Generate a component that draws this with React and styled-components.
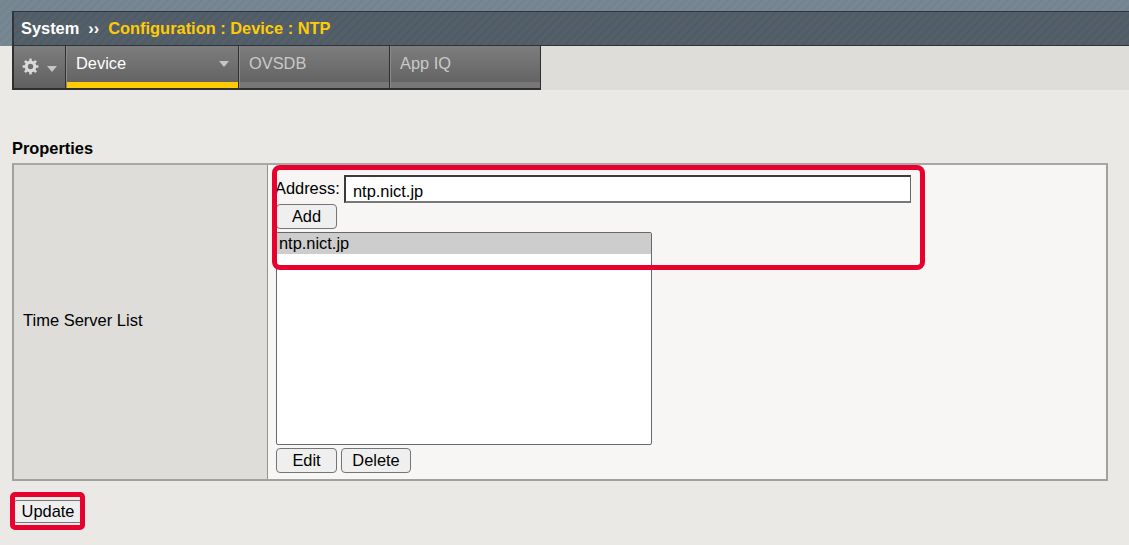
import React from "react";
import styled, { createGlobalStyle } from "styled-components";

const GlobalStyle = createGlobalStyle`
  * { box-sizing: border-box; }
  body {
    margin: 0;
    background: #eae9e5;
    font-family: "Liberation Sans", Arial, sans-serif;
    font-size: 16.4px;
    line-height: 20px;
    color: #000;
  }
`;

const Page = styled.div`
  height: 545px;
  overflow: hidden;
`;

const Banner = styled.header`
  height: 46px;
  padding: 11px 0 0 12px;
  background: repeating-linear-gradient(135deg, #778794 0 3px, #73848f 4px 6px);
`;

const Breadcrumb = styled.div`
  height: 35px;
  display: flex;
  align-items: center;
  padding: 0 0 2px 7px;
  border: solid #30353a;
  border-width: 1px 0 1px 2px;
  background: repeating-linear-gradient(135deg, #535f69 0 3px, #505b65 4px 6px);
  font-weight: bold;
  color: #fff;
  white-space: pre;
`;

const Chevrons = styled.span`
  margin: 0 9px 0 9px;
`;

const Current = styled.span`
  color: #ffcb05;
`;

const MenuRow = styled.div`
  display: flex;
  height: 44px;
  padding-left: 12px;
`;

const MenuFill = styled.div`
  flex: 1;
  background: #deddd9;
`;

const Tab = styled.div`
  position: relative;
  width: ${(p) => p.$width}px;
  height: 44px;
  display: flex;
  justify-content: space-between;
  padding: 7px 9px 0 10px;
  border: solid #302f30;
  border-width: 0 1px 2px 0;
  box-shadow: inset 1px 0 #8b8b8b;
  background: linear-gradient(#7d7d7d, #646464 36px);
  color: ${(p) => (p.$active ? "#fff" : "#c9c9c9")};

  &::after {
    content: "";
    position: absolute;
    left: 1px;
    right: 0;
    bottom: 0;
    height: 6px;
    background: ${(p) => (p.$active ? "#ffcb05" : "#777")};
  }
`;

const SettingsTab = styled.div`
  width: 54px;
  height: 44px;
  display: flex;
  gap: 8px;
  padding: 12px 0 0 8px;
  border: solid #302f30;
  border-width: 0 1px 2px 2px;
  background: linear-gradient(#7d7d7d, #606060);
`;

const Arrow = styled.i`
  width: 0;
  height: 0;
  margin-top: 8px;
  border: solid transparent;
  border-width: 6px 5px 0;
  border-top-color: #c5c5c5;
`;

const Content = styled.main`
  padding: 48px 21px 0 12px;
`;

const Heading = styled.h2`
  margin: 0;
  height: 25px;
  font-size: 16.4px;
  line-height: 20px;
`;

const Panel = styled.section`
  display: flex;
  height: 318px;
  border: 2px solid #a1a1a0;
  border-top-color: #a7a7a6;
  background: #f7f6f4;
`;

const LabelCell = styled.div`
  width: 254px;
  display: flex;
  align-items: center;
  padding: 0 0 4px 9px;
  border-right: 1px solid #939392;
  background: #deddd9;
  font-size: 16.5px;
`;

const FieldCell = styled.div`
  padding: 10px 0 0 8px;
`;

const AddressRow = styled.label`
  display: flex;
  gap: 5px;
  height: 29px;
  line-height: 26px;
`;

const LabelText = styled.span`
  width: 64px;
  margin-left: -1px;
  white-space: nowrap;
`;

const AddressInput = styled.input`
  width: 567px;
  height: 28px;
  padding: 4px 7px 0;
  border: 1px solid #666;
  border-top: 2px solid #3b3b3b;
  border-left: 2px solid #3b3b3b;
  border-bottom: 2px solid #777;
  border-radius: 0;
  background: #fff;
  color: #000;
  font: 16.4px "Liberation Sans", Arial, sans-serif;
  outline: none;
`;

const Button = styled.button`
  display: block;
  width: ${(p) => p.$width}px;
  height: ${(p) => p.$height || 25}px;
  padding: 0 0 1px;
  border: 1.5px solid #757575;
  border-radius: 4px;
  background: #efefef;
  color: #000;
  font: 16.4px/20px "Liberation Sans", Arial, sans-serif;
`;

const ServerList = styled.div`
  width: 376px;
  height: 213px;
  margin: 3px 0;
  border: 1px solid #686868;
  border-radius: 2px;
  background: #fff;
`;

const ServerOption = styled.div`
  height: 21px;
  padding-left: 2px;
  line-height: 20px;
  background: #cdcdcd;
`;

const Actions = styled.div`
  display: flex;
  gap: 4px;
`;

const Footer = styled.div`
  position: relative;
  padding: 19px 0 0 1px;
`;

const Highlight = styled.div`
  position: absolute;
  left: ${(p) => p.$x}px;
  top: ${(p) => p.$y}px;
  width: ${(p) => p.$w}px;
  height: ${(p) => p.$h}px;
  border: 5px solid #e8002f;
  border-radius: ${(p) => p.$r}px;
  pointer-events: none;
`;

const PanelWrap = styled.div`
  position: relative;
`;

function Gear() {
  return (
    <svg width="17" height="17" viewBox="0 0 17 17">
      <g stroke="#dadada" fill="none">
        <circle cx="8.5" cy="8.5" r="4.3" strokeWidth="3.2" />
        {[0, 45, 90, 135, 180, 225, 270, 315].map((a) => (
          <path key={a} d="M8.5 3.8V0.6" strokeWidth="2.5" transform={`rotate(${a} 8.5 8.5)`} />
        ))}
      </g>
    </svg>
  );
}

export default function App() {
  return (
    <Page>
      <GlobalStyle />
      <Banner>
        <Breadcrumb>
          <span>System</span>
          <Chevrons>››</Chevrons>
          <Current>Configuration : Device : NTP</Current>
        </Breadcrumb>
      </Banner>
      <MenuRow>
        <SettingsTab>
          <Gear />
          <Arrow />
        </SettingsTab>
        <Tab $width={173} $active>
          Device
          <Arrow />
        </Tab>
        <Tab $width={151}>OVSDB</Tab>
        <Tab $width={151}>App IQ</Tab>
        <MenuFill />
      </MenuRow>
      <Content>
        <Heading>Properties</Heading>
        <PanelWrap>
          <Panel>
            <LabelCell>Time Server List</LabelCell>
            <FieldCell>
              <AddressRow>
                <LabelText>Address:</LabelText>
                <AddressInput defaultValue="ntp.nict.jp" />
              </AddressRow>
              <Button $width={61}>Add</Button>
              <ServerList>
                <ServerOption>ntp.nict.jp</ServerOption>
              </ServerList>
              <Actions>
                <Button $width={61}>Edit</Button>
                <Button $width={70}>Delete</Button>
              </Actions>
            </FieldCell>
          </Panel>
          <Highlight $x={260} $y={2} $w={653} $h={105} $r={8} />
        </PanelWrap>
        <Footer>
          <Button $width={70} $height={23}>Update</Button>
          <Highlight $x={-2} $y={11} $w={75} $h={38} $r={5} />
        </Footer>
      </Content>
    </Page>
  );
}
